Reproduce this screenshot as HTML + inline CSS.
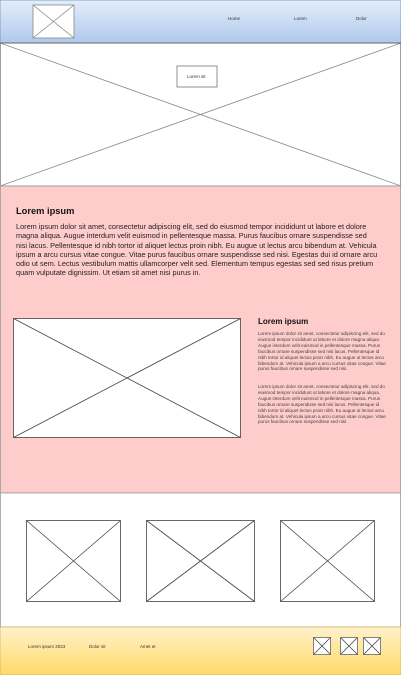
<!DOCTYPE html>
<html><head><meta charset="utf-8"><style>
html,body{margin:0;padding:0;width:401px;height:675px;overflow:hidden;background:#fff;font-family:"Liberation Sans",sans-serif;}
.t{position:absolute;color:#222;}
p{margin:0}
</style></head><body>
<svg width="401" height="675" style="position:absolute;left:0;top:0" xmlns="http://www.w3.org/2000/svg">
<defs>
<linearGradient id="hb" x1="0" y1="0" x2="0" y2="1"><stop offset="0" stop-color="#e3edfb"/><stop offset="1" stop-color="#b0c9ec"/></linearGradient>
<linearGradient id="fy" x1="0" y1="0" x2="0" y2="1"><stop offset="0" stop-color="#fff2cc"/><stop offset="1" stop-color="#ffd966"/></linearGradient>
</defs>
<g fill="none" stroke="#888" stroke-width="0.8">
<rect x="0.5" y="43" width="400" height="143" fill="#fff"/>
<line x1="0" y1="43" x2="401" y2="186"/><line x1="401" y1="43" x2="0" y2="186"/>
</g>
<rect x="0" y="0" width="401" height="43" fill="url(#hb)" stroke="#6c8ebf" stroke-width="0.8"/>
<line x1="0" y1="43" x2="401" y2="43" stroke="#666" stroke-width="1"/>
<g stroke="#888" stroke-width="0.8" fill="#fff">
<rect x="33" y="5" width="41" height="33"/>
<line x1="33" y1="5" x2="74" y2="38"/><line x1="74" y1="5" x2="33" y2="38"/>
<rect x="177" y="66" width="40" height="21" stroke="#777"/>
</g>
<rect x="0.5" y="186" width="400" height="307" fill="#ffcccc" stroke="#999" stroke-width="0.8"/>
<rect x="0.5" y="493" width="400" height="134" fill="#fff" stroke="#999" stroke-width="0.8"/>
<rect x="0" y="627" width="401" height="48" fill="url(#fy)" stroke="#d6b656" stroke-width="0.8"/>
<g stroke="#444" stroke-width="0.8" fill="#fff">
<rect x="13.5" y="318.5" width="227" height="119"/>
<line x1="13.5" y1="318.5" x2="240.5" y2="437.5"/><line x1="240.5" y1="318.5" x2="13.5" y2="437.5"/>
<rect x="26.5" y="520.5" width="94" height="81"/>
<line x1="26.5" y1="520.5" x2="120.5" y2="601.5"/><line x1="120.5" y1="520.5" x2="26.5" y2="601.5"/>
<rect x="146.5" y="520.5" width="108" height="81"/>
<line x1="146.5" y1="520.5" x2="254.5" y2="601.5"/><line x1="254.5" y1="520.5" x2="146.5" y2="601.5"/>
<rect x="280.5" y="520.5" width="94" height="81"/>
<line x1="280.5" y1="520.5" x2="374.5" y2="601.5"/><line x1="374.5" y1="520.5" x2="280.5" y2="601.5"/>
<rect x="313.5" y="637.5" width="17" height="17" stroke="#666"/>
<line x1="313.5" y1="637.5" x2="330.5" y2="654.5"/><line x1="330.5" y1="637.5" x2="313.5" y2="654.5"/>
<rect x="340.5" y="637.5" width="17" height="17" stroke="#666"/>
<line x1="340.5" y1="637.5" x2="357.5" y2="654.5"/><line x1="357.5" y1="637.5" x2="340.5" y2="654.5"/>
<rect x="363.5" y="637.5" width="17" height="17" stroke="#666"/>
<line x1="363.5" y1="637.5" x2="380.5" y2="654.5"/><line x1="380.5" y1="637.5" x2="363.5" y2="654.5"/>
</g>
<g font-family="Liberation Sans,sans-serif" font-size="4.5" fill="#333">
<text x="228" y="20">Home</text><text x="294" y="20">Lorem</text><text x="356" y="20">Dolor</text>
<text x="187" y="78">Lorem sit</text>
<text x="28" y="648">Lorem ipsum 2023</text><text x="89" y="648">Dolor sit</text><text x="140" y="648">Amet et</text>
</g>
</svg>
<div class="t" style="left:16px;top:206px;font-size:9.3px;font-weight:bold;color:#111">Lorem ipsum</div>
<p class="t" style="left:16px;top:222px;white-space:nowrap;font-size:7.32px;line-height:9.3px;color:#222">Lorem ipsum dolor sit amet, consectetur adipiscing elit, sed do eiusmod tempor incididunt ut labore et dolore<br>magna aliqua. Augue interdum velit euismod in pellentesque massa. Purus faucibus ornare suspendisse sed<br>nisi lacus. Pellentesque id nibh tortor id aliquet lectus proin nibh. Eu augue ut lectus arcu bibendum at. Vehicula<br>ipsum a arcu cursus vitae congue. Vitae purus faucibus ornare suspendisse sed nisi. Egestas dui id ornare arcu<br>odio ut sem. Lectus vestibulum mattis ullamcorper velit sed. Elementum tempus egestas sed sed risus pretium<br>quam vulputate dignissim. Ut etiam sit amet nisi purus in.</p>
<div class="t" style="left:258px;top:317px;font-size:8px;font-weight:bold;color:#111">Lorem ipsum</div>
<p class="t" style="left:258px;top:331px;width:130px;font-size:4.6px;line-height:5.9px;color:#444">Lorem ipsum dolor sit amet, consectetur adipiscing elit, sed do eiusmod tempor incididunt ut labore et dolore magna aliqua. Augue interdum velit euismod in pellentesque massa. Purus faucibus ornare suspendisse sed nisi lacus. Pellentesque id nibh tortor id aliquet lectus proin nibh. Eu augue ut lectus arcu bibendum at. Vehicula ipsum a arcu cursus vitae congue. Vitae purus faucibus ornare suspendisse sed nisi.</p>
<p class="t" style="left:258px;top:384px;width:130px;font-size:4.6px;line-height:5.9px;color:#444">Lorem ipsum dolor sit amet, consectetur adipiscing elit, sed do eiusmod tempor incididunt ut labore et dolore magna aliqua. Augue interdum velit euismod in pellentesque massa. Purus faucibus ornare suspendisse sed nisi lacus. Pellentesque id nibh tortor id aliquet lectus proin nibh. Eu augue ut lectus arcu bibendum at. Vehicula ipsum a arcu cursus vitae congue. Vitae purus faucibus ornare suspendisse sed nisi.</p>
</body></html>
